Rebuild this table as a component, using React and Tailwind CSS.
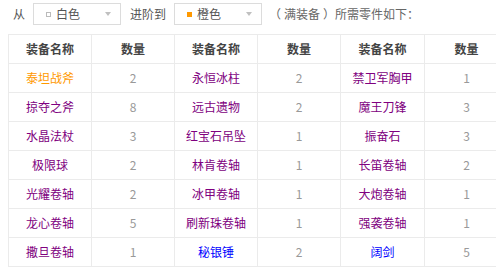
import React from 'react';

const rows = [
  [['泰坦战斧', 'orange'], 2, ['永恒冰柱'], 2, ['禁卫军胸甲'], 1],
  [['掠夺之斧'], 8, ['远古遗物'], 2, ['魔王刀锋'], 3],
  [['水晶法杖'], 3, ['红宝石吊坠'], 1, ['振奋石'], 3],
  [['极限球'], 2, ['林肯卷轴'], 1, ['长笛卷轴'], 2],
  [['光耀卷轴'], 2, ['冰甲卷轴'], 1, ['大炮卷轴'], 1],
  [['龙心卷轴'], 5, ['刷新珠卷轴'], 1, ['强袭卷轴'], 1],
  [['撒旦卷轴'], 1, ['秘银锤', 'blue'], 2, ['阔剑', 'blue'], 5],
];

const nameColor = {
  orange: 'text-[#ff9900]',
  blue: 'text-[#0000ff]',
  purple: 'text-[#800080]',
};

const Select = ({ label, swatch }) => (
  <div className="flex items-center w-[88px] h-[22px] border border-[#dcdcdc] bg-white pl-[12px] pr-[9px]">
    {swatch}
    <span className="ml-[5px] text-[#555]">{label}</span>
    <span className="ml-auto w-0 h-0 border-l-[3px] border-r-[3px] border-t-[4px] border-l-transparent border-r-transparent border-t-[#c0c0c0]" />
  </div>
);

const App = () => {
  return (
    <div
      className="w-[496px] h-[271px] overflow-hidden bg-white text-[12px] leading-none"
      style={{ fontFamily: '"Noto Sans CJK SC", "Liberation Sans", sans-serif' }}
    >
      <div className="flex items-center pt-[3px] pl-[13px] h-[25px] text-[#555]">
        <span>从</span>
        <div className="ml-[8px]">
          <Select label="白色" swatch={<span className="w-[5px] h-[5px] border border-[#bbb] bg-white" />} />
        </div>
        <span className="ml-[9px]">进阶到</span>
        <div className="ml-[8px]">
          <Select label="橙色" swatch={<span className="w-[5px] h-[5px] bg-[#ff9900]" />} />
        </div>
        <span className="ml-[7px] text-[#666]">
          （<span className="ml-[3px] mr-[3px]">满装备</span>）所需零件如下：
        </span>
      </div>

      <div className="mt-[9px] ml-[8px]">
        <table className="table-fixed border-collapse w-[500px]">
          <colgroup>
            <col className="w-[83px]" />
            <col className="w-[83px]" />
            <col className="w-[83px]" />
            <col className="w-[83px]" />
            <col className="w-[84px]" />
            <col className="w-[84px]" />
          </colgroup>
          <thead>
            <tr>
              {['装备名称', '数量', '装备名称', '数量', '装备名称', '数量'].map((h, i) => (
                <th key={i} className="h-[29px] p-0 border border-[#ebebeb] font-bold text-[#444] text-center">
                  {h}
                </th>
              ))}
            </tr>
          </thead>
          <tbody>
            {rows.map((r, ri) => (
              <tr key={ri}>
                {r.map((c, ci) =>
                  Array.isArray(c) ? (
                    <td key={ci} className={`h-[29px] p-0 border border-[#ebebeb] text-center ${nameColor[c[1] || 'purple']}`}>
                      {c[0]}
                    </td>
                  ) : (
                    <td key={ci} className="h-[29px] p-0 border border-[#ebebeb] text-center text-[#999]">
                      {c}
                    </td>
                  )
                )}
              </tr>
            ))}
          </tbody>
        </table>
      </div>
    </div>
  );
};

export default App;
